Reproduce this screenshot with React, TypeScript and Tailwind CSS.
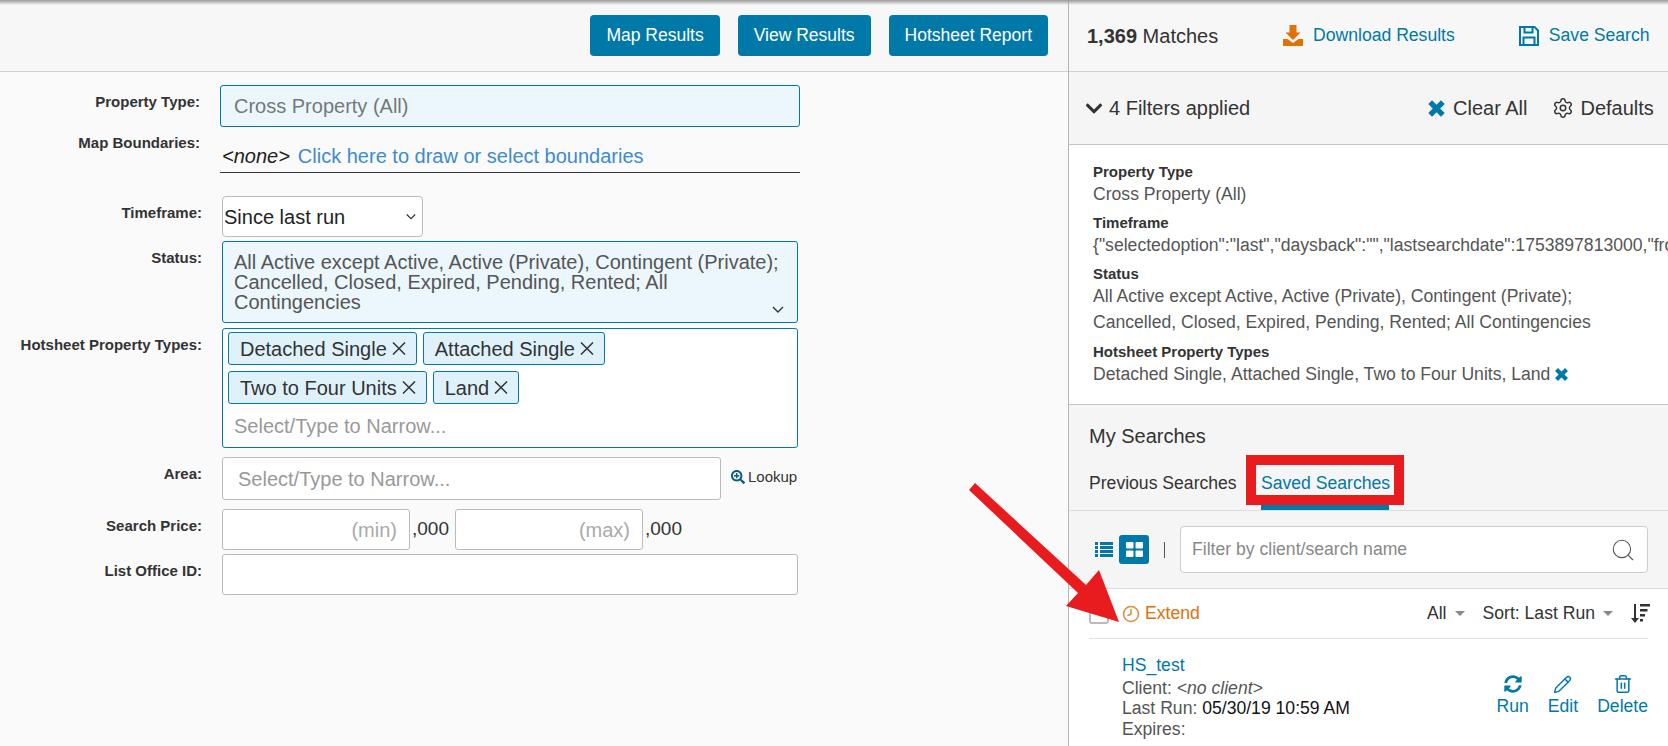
import React from 'react';
import { Clock, Pencil, Search, Settings, Trash2 } from 'lucide-react';
import { FaChevronDown, FaSearchPlus, FaSyncAlt } from 'react-icons/fa';

const Label: React.FC<{ children: React.ReactNode; className?: string }> = ({ children, className }) => (
  <div className={`w-[202px] shrink-0 text-right text-[15px] leading-4 font-bold text-[#333] ${className ?? ''}`}>{children}</div>
);

const ThinChevron: React.FC<{ className?: string }> = ({ className }) => (
  <svg viewBox="0 0 12 8" className={`h-[8px] w-3 fill-none stroke-[#333] stroke-[1.4] ${className ?? ''}`}>
    <path d="M1 1l5 5 5-5" />
  </svg>
);

const ThickX: React.FC<{ className?: string }> = ({ className }) => (
  <svg viewBox="0 0 18 18" className={`fill-none stroke-[#0079a8] stroke-[5] ${className ?? ''}`}>
    <path d="M3 3l12 12M15 3L3 15" />
  </svg>
);

const Chip: React.FC<{ label: string }> = ({ label }) => (
  <div className="flex h-[33px] items-center rounded-[3px] border border-[#0079a8] bg-[#dff2fb] pr-[10px] pl-[11px] text-[20px] whitespace-nowrap text-[#333]">
    {label}
    <svg viewBox="0 0 14 13" className="ml-[5px] h-[13px] w-[14px] fill-none stroke-[#333] stroke-[1.5]">
      <path d="M1 .5l12 12M13 .5l-12 12" />
    </svg>
  </div>
);

const TopButton: React.FC<{ label: string }> = ({ label }) => (
  <button className="h-[41px] rounded-[4px] bg-[#0079a8] px-4 text-[17.500px] text-white">{label}</button>
);

const FilterDetail: React.FC<{ title: string; className?: string; children: React.ReactNode }> = ({ title, className, children }) => (
  <div className={className}>
    <div className="text-[15px] leading-[22px] font-bold text-[#333]">{title}</div>
    <div className="text-[17.600px] leading-[22px] whitespace-nowrap text-[#555]">{children}</div>
  </div>
);

const RowAction: React.FC<{ icon: React.ReactNode; label: string }> = ({ icon, label }) => (
  <div className="flex flex-col items-center text-[#0079a8]">
    <div className="flex h-[22px] items-center">{icon}</div>
    <span className="text-[17.600px] leading-[22px]">{label}</span>
  </div>
);

export default function App() {
  return (
    <div className="relative flex h-[746px] w-full overflow-hidden bg-[#fafafa] font-['Liberation_Sans',Arial,sans-serif]">
      {/* top shadow */}
      <div className="absolute top-0 left-0 z-10 h-[5px] w-full bg-linear-to-b from-[#9a9a9a] to-transparent" />

      {/* left column */}
      <div className="w-[1068px] shrink-0">
        <div className="flex h-[72px] items-start justify-end gap-[18px] border-b border-[#d0d0d0] bg-[#f7f7f7] pt-[15px] pr-5">
          <TopButton label="Map Results" />
          <TopButton label="View Results" />
          <TopButton label="Hotsheet Report" />
        </div>

        <div className="pr-[270px]">
          <div className="mt-[13px] -mr-[2px] flex">
            <Label className="mt-[9px] pr-[2px]">Property Type:</Label>
            <div className="ml-[18px] flex h-[42px] flex-1 items-center rounded-[3px] border border-[#0079a8] bg-[#ebf7fd] pl-[13px] text-[20px] text-[#777]">
              Cross Property (All)
            </div>
          </div>

          <div className="mt-[7px] -mr-[2px] flex">
            <Label className="mt-[1px] pr-[2px]">Map Boundaries:</Label>
            <div className="ml-[18px] flex h-[39px] flex-1 items-end gap-2 border-b border-[#333] pb-[4px] pl-[2px] text-[20px] leading-6">
              <span className="text-[#222] italic">&lt;none&gt;</span>
              <span className="text-[#3f8bcb]">Click here to draw or select boundaries</span>
            </div>
          </div>

          <div className="mt-[23px] flex">
            <Label className="mt-[9px]">Timeframe:</Label>
            <div className="ml-5 flex h-[41px] w-[201px] items-center justify-between rounded-[4px] border border-[#bbb] bg-white pr-[6px] pl-[1px] text-[20px] text-[#222]">
              Since last run
              <ThinChevron className="h-[7px] w-[10px]" />
            </div>
          </div>

          <div className="mt-[4px] flex">
            <Label className="mt-[9px]">Status:</Label>
            <div className="relative ml-5 h-[82px] flex-1 rounded-[3px] border border-[#0079a8] bg-[#ebf7fd] pt-[10px] pr-[12px] pl-[11px] text-[20px] leading-5 text-[#555]">
              All Active except Active, Active (Private), Contingent (Private); Cancelled, Closed, Expired, Pending, Rented; All Contingencies
              <ThinChevron className="absolute right-[13px] bottom-[8px]" />
            </div>
          </div>

          <div className="mt-[5px] flex">
            <Label className="mt-[9px]">Hotsheet Property Types:</Label>
            <div className="ml-5 h-[120px] flex-1 rounded-[3px] border border-[#0079a8] bg-white pt-[3px] pl-[5px]">
              <div className="flex gap-[6px]">
                <Chip label="Detached Single" />
                <Chip label="Attached Single" />
              </div>
              <div className="mt-[6px] flex gap-[6px]">
                <Chip label="Two to Four Units" />
                <Chip label="Land" />
              </div>
              <div className="mt-[10px] pl-[6px] text-[20px] leading-6 text-[#999]">Select/Type to Narrow...</div>
            </div>
          </div>

          <div className="mt-[9px] flex">
            <Label className="mt-[9px]">Area:</Label>
            <div className="ml-5 flex h-[43px] w-[499px] items-center rounded-[3px] border border-[#bbb] bg-white pl-[15px] text-[20px] text-[#999]">
              Select/Type to Narrow...
            </div>
            <div className="mt-[10px] ml-[10px] flex h-5 items-center gap-[3px] text-[15px] whitespace-nowrap text-[#333]">
              <FaSearchPlus className="h-[14px] w-[14px] text-[#0b5c7d]" />
              Lookup
            </div>
          </div>

          <div className="mt-[9px] flex">
            <Label className="mt-[9px]">Search Price:</Label>
            <div className="ml-5 flex h-[41px] w-[188px] items-center justify-end rounded-[3px] border border-[#bbb] bg-white pr-[12px] text-[20px] text-[#aaa]">
              (min)
            </div>
            <span className="ml-[2px] flex items-center text-[19px] text-[#333]">,000</span>
            <div className="ml-[6px] flex h-[41px] w-[188px] items-center justify-end rounded-[3px] border border-[#bbb] bg-white pr-[12px] text-[20px] text-[#aaa]">
              (max)
            </div>
            <span className="ml-[2px] flex items-center text-[19px] text-[#333]">,000</span>
          </div>

          <div className="mt-[4px] flex">
            <Label className="mt-[9px]">List Office ID:</Label>
            <div className="ml-5 h-[41px] flex-1 rounded-[3px] border border-[#bbb] bg-white" />
          </div>
        </div>
      </div>

      {/* right column */}
      <div className="flex min-w-0 flex-1 flex-col border-l border-[#b5b5b5] bg-white">
        <div className="flex h-[72px] shrink-0 items-center border-b border-[#d0d0d0] bg-[#f7f7f7] pl-[18px] text-[17.600px]">
          <div className="w-[196px] text-[20px] text-[#333]">
            <span className="font-bold">1,369</span> Matches
          </div>
          <svg viewBox="0 0 20 21" className="h-[21px] w-5 fill-[#e07008]">
            <path d="M6.500 0h7v7.500h4L10 15 2.500 7.500h4z" />
            <path d="M0 14h4.500l5.500 4 5.500-4H20v7H0z" />
          </svg>
          <span className="ml-[10px] text-[#0079a8]">Download Results</span>
          <svg viewBox="0 0 20 20" className="ml-[64px] h-5 w-5 fill-none stroke-[#0079a8] stroke-[2]">
            <path d="M1 1h14.500L19 4.500V19H1z" />
            <path d="M5.500 1v5.500h8V1M4.500 19v-7.500h11V19" />
          </svg>
          <span className="ml-[10px] text-[#0079a8]">Save Search</span>
        </div>

        <div className="flex h-[73px] shrink-0 items-center border-b border-[#c4c4c4] bg-[#f5f5f5] pl-[15px] text-[20px] text-[#333]">
          <FaChevronDown className="h-[19px] w-5" />
          <span className="ml-[5px] w-[318px]">4 Filters applied</span>
          <ThickX className="h-[19px] w-[19px]" />
          <span className="ml-[7px]">Clear All</span>
          <Settings className="ml-[25px] h-[22px] w-[22px]" strokeWidth={1.6} />
          <span className="ml-[6px]">Defaults</span>
        </div>

        <div className="h-[260px] shrink-0 overflow-hidden border-b border-[#c4c4c4] pt-[16px] pl-[24px]">
          <FilterDetail title="Property Type">Cross Property (All)</FilterDetail>
          <FilterDetail title="Timeframe" className="mt-[7px]">
            {'{"selectedoption":"last","daysback":"","lastsearchdate":1753897813000,"from'}
          </FilterDetail>
          <FilterDetail title="Status" className="mt-[7px]">
            <div className="-mt-[2px] leading-[26px]">
              All Active except Active, Active (Private), Contingent (Private);
              <br />
              Cancelled, Closed, Expired, Pending, Rented; All Contingencies
            </div>
          </FilterDetail>
          <FilterDetail title="Hotsheet Property Types" className="mt-[6px]">
            <span className="flex items-center">
              Detached Single, Attached Single, Two to Four Units, Land
              <ThickX className="ml-1 h-[15px] w-[15px]" />
            </span>
          </FilterDetail>
        </div>

        <div className="h-[106px] shrink-0 border-b border-[#ddd] bg-[#f5f5f5]">
          <div className="pt-[20px] pl-5 text-[20px] leading-[22px] text-[#333]">My Searches</div>
          <div className="mt-[8px] flex items-start pl-5 text-[17.600px] text-[#333]">
            <div className="w-[157px] pt-[17px] leading-[22px] whitespace-nowrap">Previous Searches</div>
            <div className="relative h-[50px] w-[158px] border-[10px] border-[#e81c1f]">
              <div className="absolute top-[7px] left-[5px] leading-[22px] whitespace-nowrap text-[#0079a8]">Saved Searches</div>
            </div>
          </div>
          <div className="ml-[192px] h-[5px] w-[128px] bg-[#0079a8]" />
        </div>

        <div className="flex h-[78px] shrink-0 items-center border-b border-[#ddd] bg-[#f5f5f5] pr-5 pl-[26px]">
          <svg viewBox="0 0 18 15" className="h-[15px] w-[18px] fill-[#0079a8]">
            <path d="M0 0h3v3H0zM5 0h13v3H5zM0 4h3v3H0zM5 4h13v3H5zM0 8h3v3H0zM5 8h13v3H5zM0 12h3v3H0zM5 12h13v3H5z" />
          </svg>
          <div className="ml-[6px] flex h-[29px] w-[30px] items-center justify-center rounded-[3px] bg-[#0079a8]">
            <svg viewBox="0 0 17 15" className="h-[15px] w-[17px] fill-white">
              <rect width="7.500" height="6.500" rx="1" />
              <rect x="9.500" width="7.500" height="6.500" rx="1" />
              <rect y="8.500" width="7.500" height="6.500" rx="1" />
              <rect x="9.500" y="8.500" width="7.500" height="6.500" rx="1" />
            </svg>
          </div>
          <div className="ml-[15px] h-4 w-px bg-[#555]" />
          <div className="ml-[15px] flex h-[47px] flex-1 items-center justify-between rounded-[4px] border border-[#ccc] bg-white pr-[11px] pl-[11px] text-[17.600px] text-[#888]">
            Filter by client/search name
            <Search className="h-[26px] w-[26px] text-[#555]" strokeWidth={1} />
          </div>
        </div>

        <div className="mx-5 flex h-[50px] shrink-0 items-center border-b border-[#e2e2e2]">
          <div className="h-[20px] w-[20px] rounded-[3px] border-2 border-[#bbb] bg-white" />
          <Clock className="ml-[13px] h-[18px] w-[18px] -scale-x-100 text-[#e08a3c]" strokeWidth={2} />
          <span className="ml-[5px] text-[17.600px] text-[#e07008]">Extend</span>
          <div className="-mr-[2px] ml-auto flex items-center text-[17.600px] text-[#333]">
            <span>All</span>
            <span className="ml-2 h-0 w-0 border-x-[5px] border-t-[5px] border-x-transparent border-t-[#888]" />
            <span className="ml-[18px]">Sort: Last Run</span>
            <span className="ml-2 h-0 w-0 border-x-[5px] border-t-[5px] border-x-transparent border-t-[#888]" />
            <svg viewBox="0 0 19 19" className="ml-[18px] h-[19px] w-[19px] fill-[#333]">
              <path d="M3 0h2v14h3l-4 5-4-5h3zM9 0h10v2.500H9zM9 5h7.500v2.500H9zM9 10h5v2.500H9zM9 15h3v2.500H9z" />
            </svg>
          </div>
        </div>

        <div className="flex items-start pr-5 pl-[53px]">
          <div className="flex-1 pt-[16px] text-[17.600px] leading-[20.500px] text-[#555]">
            <div className="mb-[2px] text-[#0079a8]">HS_test</div>
            <div>
              Client: <span className="italic">&lt;no client&gt;</span>
            </div>
            <div>
              Last Run: <span className="text-[#111]">05/30/19 10:59 AM</span>
            </div>
            <div>Expires:</div>
          </div>
          <div className="mt-[34px] flex gap-[19px]">
            <RowAction icon={<FaSyncAlt className="h-[18px] w-[18px]" />} label="Run" />
            <RowAction icon={<Pencil className="h-[19px] w-[19px]" strokeWidth={1.8} />} label="Edit" />
            <RowAction icon={<Trash2 className="h-5 w-5" strokeWidth={1.8} />} label="Delete" />
          </div>
        </div>
      </div>

      {/* annotation arrow drawn over the screenshot */}
      <svg className="pointer-events-none absolute top-0 left-0 z-20 h-[746px] w-[1668px]" viewBox="0 0 1668 746">
        <polygon points="969,490 975,483 1086,585 1099,570 1119,622 1066,606 1078,593" fill="#e81c1f" />
      </svg>
    </div>
  );
}
